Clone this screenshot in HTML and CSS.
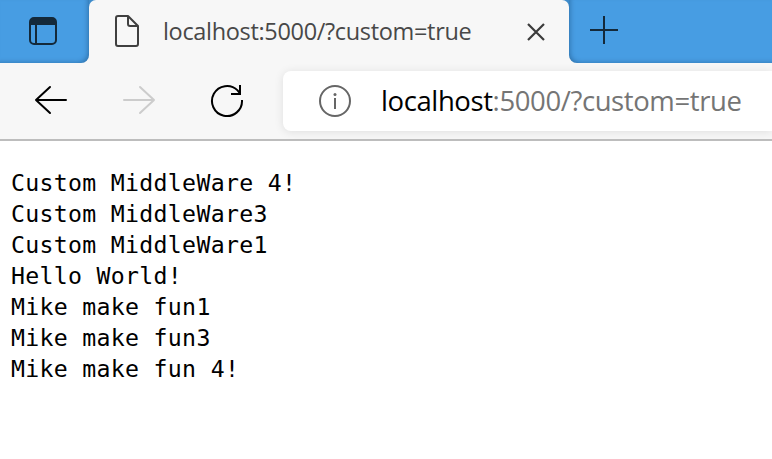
FILE: index.html
```html
<!DOCTYPE html>
<html lang="en">
<head>
<meta charset="utf-8">
<title>localhost:5000/?custom=true</title>
<link rel="stylesheet" href="styles.css">
</head>
<body>
<header class="tabstrip">
  <div class="strip-left">
    <svg class="icon-tabs" width="30" height="30" viewBox="0 0 30 30" fill="none" stroke="#14293a" stroke-width="2"><rect x="2" y="2" width="26" height="26" rx="4"/><path d="M2 8V6a4 4 0 0 1 4-4h18a4 4 0 0 1 4 4v2z" fill="#14293a" stroke="none"/><path d="M2 8h26M8 8v20"/></svg>
  </div>
  <div class="tab-wrap">
    <div class="tab">
      <svg width="26" height="34" viewBox="0 0 26 34" fill="none" stroke="#404040" stroke-width="2" stroke-linejoin="round"><path d="M14 2H4a2 2 0 0 0-2 2v26a2 2 0 0 0 2 2h18a2 2 0 0 0 2-2V12zV10a2 2 0 0 0 2 2h8"/></svg>
      <span class="tab-title">localhost:5000/?custom=true</span>
      <svg class="close" width="18" height="18" viewBox="0 0 18 18" stroke="#3b3b3b" stroke-width="2.2"><path d="M1 1l16 16M17 1L1 17"/></svg>
    </div>
  </div>
  <div class="strip-right">
    <svg width="28" height="28" viewBox="0 0 28 28" stroke="#14293a" stroke-width="2"><path d="M0 14h28M14 0v28"/></svg>
  </div>
</header>
<nav class="toolbar">
  <svg class="back" width="34" height="30" viewBox="0 0 34 30" fill="none" stroke="#000" stroke-width="2" stroke-linecap="round" stroke-linejoin="round"><path d="M32 15H2M16 2L2 15l14 13"/></svg>
  <svg class="forward" width="34" height="30" viewBox="0 0 34 30" fill="none" stroke="#ccc" stroke-width="2" stroke-linecap="round" stroke-linejoin="round"><path d="M2 15h30M18 2l14 13-14 13"/></svg>
  <svg class="reload" width="34" height="34" viewBox="0 0 34 34" fill="none" stroke="#000" stroke-width="2"><path d="M31.970 16A15 15 0 1 1 27.600 6.400L30 9.500M30 1v9h-9"/></svg>
  <div class="address">
    <svg width="32" height="32" viewBox="0 0 32 32" fill="none" stroke="#666" stroke-width="2"><circle cx="16" cy="16" r="15"/><path d="M16 13v11"/><circle cx="16" cy="9.500" r="1.500" fill="#666" stroke="none"/></svg>
    <span class="url">localhost<span class="url-rest">:5000/?custom=true</span></span>
  </div>
</nav>
<pre class="content">Custom MiddleWare 4!
Custom MiddleWare3
Custom MiddleWare1
Hello World!
Mike make fun1
Mike make fun3
Mike make fun 4!</pre>
</body>
</html>
```
FILE: styles.css
```css
* { box-sizing: border-box; }
body { margin: 0; height: 459px; overflow: hidden; background: #fff; color: #000; }
svg { display: block; flex: none; }
.tabstrip { display: flex; height: 63px; background: #f7f7f7; }
.strip-left, .strip-right { background: #479de3; }
.strip-left {
  width: 89px;
  padding: 16px 0 0 28px;
  border-bottom-right-radius: 8px;
  box-shadow: inset -3px -2px 5px -2px rgba(0, 35, 70, .35);
}
.strip-right {
  flex: 1;
  padding: 16px 0 0 21px;
  border-bottom-left-radius: 8px;
  box-shadow: inset 3px -2px 5px -2px rgba(0, 35, 70, .35);
}
.tab-wrap { width: 480px; background: linear-gradient(#3e8bca 12px, #f7f7f7 12px); }
.tab {
  display: flex;
  align-items: center;
  height: 63px;
  padding: 0 24px 1px 25px;
  border-radius: 7px 7px 0 0;
  background: #f7f7f7;
}
.tab-title {
  margin: -1px 0 0 23px;
  font: 23.500px/36px "Open Sans", "Noto Sans", sans-serif;
  letter-spacing: -.33px;
  white-space: nowrap;
  color: #484848;
}
.close { margin: 2px 0 0 auto; }
.toolbar {
  display: flex;
  align-items: center;
  height: 78px;
  padding: 0 0 0 34px;
  border-bottom: 2px solid #bdbdbd;
  background: #f7f7f7;
}
.back, .forward { margin-top: -2px; }
.forward { margin-left: 54px; }
.reload { margin-left: 54px; }
.address {
  display: flex;
  flex: 1;
  align-items: center;
  height: 60px;
  margin-left: 39px;
  padding-left: 36px;
  border-radius: 8px 0 0 8px;
  background: #fff;
  box-shadow: 0 1px 10px rgba(0, 0, 0, .1);
}
.url {
  margin-left: 30px;
  font: 27.500px/40px "Open Sans", "Noto Sans", sans-serif;
  letter-spacing: -.4px;
  white-space: nowrap;
}
.url-rest { color: #757575; }
.content {
  margin: 0;
  padding: 26px 0 0 11px;
  font: 23.200px/31px "DejaVu Sans Mono", monospace;
  letter-spacing: .3px;
}
```
